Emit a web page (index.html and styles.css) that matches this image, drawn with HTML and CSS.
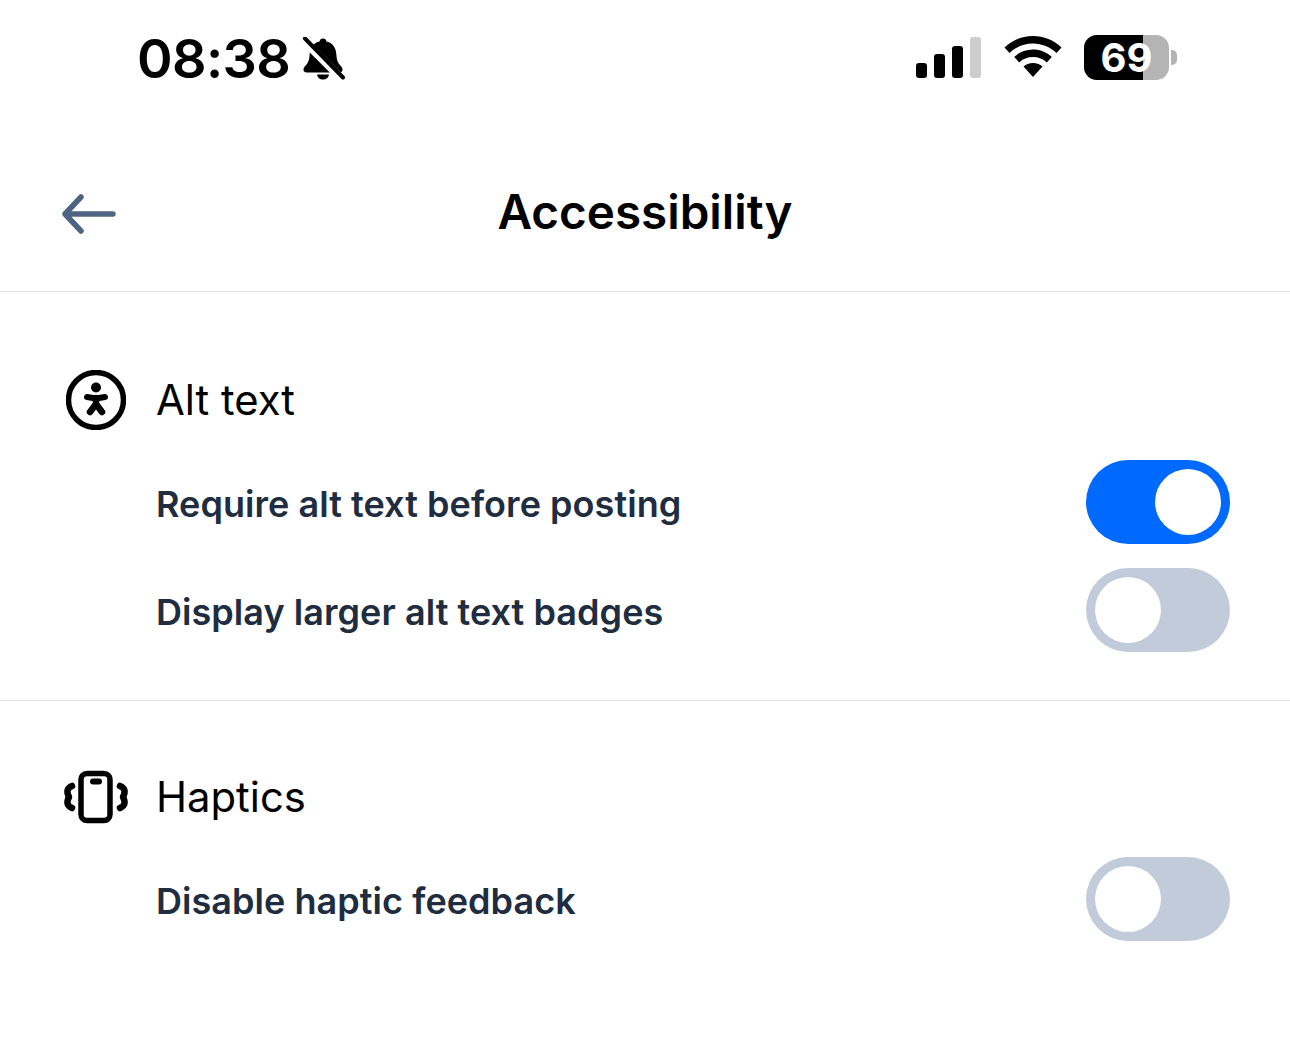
FILE: index.html
```html
<!DOCTYPE html>
<html lang="en">
<head>
<meta charset="utf-8">
<title>Accessibility</title>
<link rel="stylesheet" href="styles.css">
</head>
<body>
<div class="status">
  <div class="status-left">
    <span class="time">08:38</span>
    <svg class="bell" viewBox="0 0 44 44" width="44" height="44">
      <path d="M22 1.5c1.9 0 3.2 1.3 3.400 3 6 1.200 9.400 5.800 9.900 12.400.3 5.200 1.200 8.600 3.600 11.200 1.800 1.900 2.600 3 2.600 4.600 0 1.700-1.300 2.800-3.200 2.800H5.700c-1.900 0-3.200-1.100-3.200-2.800 0-1.600.8-2.700 2.600-4.600 2.400-2.600 3.300-6 3.600-11.200.5-6.600 3.900-11.200 9.900-12.400.2-1.700 1.500-3 3.400-3z"/>
      <path d="M16 37.500h12c-.4 3-2.900 5-6 5s-5.600-2-6-5z"/>
      <path d="M2 3 41 42" class="bell-gap"/>
      <path d="M4 1.500 42 40.500" class="bell-line"/>
    </svg>
  </div>
  <div class="status-right">
    <div class="signal">
      <span class="bar bar-1"></span>
      <span class="bar bar-2"></span>
      <span class="bar bar-3"></span>
      <span class="bar bar-4"></span>
    </div>
    <svg class="wifi" viewBox="0 0 60 44" width="60" height="44">
      <path d="M30 1C19 1 9.500 5 1.500 12.500l5 5.500C13 12 21 8.600 30 8.600S47 12 53.500 18l5-5.500C50.500 5 41 1 30 1z"/>
      <path d="M30 14.500c-7.300 0-13.600 2.600-18.800 7.400l5 5.500c3.700-3.400 8.300-5.300 13.800-5.300s10.100 1.900 13.800 5.300l5-5.500C43.600 17.100 37.300 14.500 30 14.500z"/>
      <path d="M30 28c-3.800 0-7 1.300-9.500 3.500L30 42l9.500-10.500C37 29.300 33.800 28 30 28z"/>
    </svg>
    <div class="battery">
      <div class="battery-body">
        <span class="battery-fill"></span>
        <span class="battery-level">69</span>
      </div>
      <span class="battery-cap"></span>
    </div>
  </div>
</div>

<header class="header">
  <svg class="back" viewBox="0 0 56 44" width="56" height="44">
    <path d="M52 22H4M20 5 4 22l16 17"/>
  </svg>
  <h1 class="title">Accessibility</h1>
</header>

<section class="section section-first">
  <div class="section-title">
    <span class="icon-box">
      <svg viewBox="0 0 60 60" width="60" height="60">
        <circle class="ring" cx="30" cy="30" r="27.500"/>
        <circle class="solid" cx="30" cy="17.500" r="5"/>
        <path class="figure-arms" d="M21 27l9 1.500 9-1.500"/>
        <path class="figure" d="M30 28v6M30 34l-6 8M30 34l6 8"/>
      </svg>
    </span>
    <h2 class="section-name">Alt text</h2>
  </div>
  <div class="rows">
    <div class="row">
      <span class="label">Require alt text before posting</span>
      <span class="toggle toggle-on"><span class="thumb"></span></span>
    </div>
    <div class="row">
      <span class="label">Display larger alt text badges</span>
      <span class="toggle"><span class="thumb"></span></span>
    </div>
  </div>
</section>

<section class="section">
  <div class="section-title">
    <span class="icon-box">
      <svg viewBox="0 0 68 56" width="68" height="56">
        <rect class="ring" x="19" y="4.500" width="29" height="47" rx="6"/>
        <path class="notch" d="M31 12.500h6"/>
        <path class="wave" d="M10 17C4.500 19.500 4.500 23 7 28 4.500 33 4.500 36.500 10 39"/>
        <path class="wave" d="M58 17C63.500 19.500 63.500 23 61 28 63.500 33 63.500 36.500 58 39"/>
      </svg>
    </span>
    <h2 class="section-name">Haptics</h2>
  </div>
  <div class="rows">
    <div class="row">
      <span class="label">Disable haptic feedback</span>
      <span class="toggle"><span class="thumb"></span></span>
    </div>
  </div>
</section>
</body>
</html>
```

FILE: styles.css
```css
* { box-sizing: border-box; }
html, body { margin: 0; padding: 0; }
body {
  width: 1290px;
  height: 1046px;
  overflow: hidden;
  background: #fff;
  color: #000;
  font-family: Inter, "Liberation Sans", sans-serif;
}

.status {
  height: 118px;
  display: flex;
  justify-content: space-between;
  align-items: center;
  padding: 0 113px 4px 137px;
}
.status-left { display: flex; align-items: center; gap: 11px; margin-top: 4px; }
.time {
  font-size: 54px;
  font-weight: 600;
  line-height: 60px;
  letter-spacing: -0.6px;
}
.bell { display: block; width: 44px; height: 44px; }
.bell-gap { stroke: #fff; stroke-width: 8; fill: none; }
.bell-line { stroke: #000; stroke-width: 4; fill: none; stroke-linecap: round; }

.status-right { display: flex; align-items: center; }
.signal { display: flex; align-items: flex-end; gap: 7px; height: 41px; margin-right: 22px; }
.bar { width: 11px; background: #000; border-radius: 3px; display: block; }
.bar-1 { height: 15px; }
.bar-2 { height: 24px; }
.bar-3 { height: 32px; }
.bar-4 { height: 41px; background: #cdcdcd; }
.wifi { display: block; margin-right: 21px; }
.battery { display: flex; align-items: center; gap: 2px; }
.battery-body {
  position: relative;
  width: 85px;
  height: 45px;
  border-radius: 13px;
  background: #b4b4b4;
  display: flex;
  align-items: center;
  justify-content: center;
}
.battery-fill {
  position: absolute;
  left: 0;
  top: 0;
  bottom: 0;
  width: 59px;
  background: #000;
  border-radius: 13px 0 0 13px;
}
.battery-level {
  position: relative;
  color: #fff;
  font-size: 40px;
  font-weight: 700;
  line-height: 45px;
}
.battery-cap {
  width: 6px;
  height: 15px;
  background: #b4b4b4;
  border-radius: 0 5px 5px 0;
}

.header {
  height: 174px;
  position: relative;
  display: flex;
  align-items: center;
  justify-content: center;
  border-bottom: 1px solid #e1e5ea;
  padding-top: 15px;
}
.back {
  position: absolute;
  left: 61px;
  top: 74px;
}
.back path {
  fill: none;
  stroke: #4f6482;
  stroke-width: 5.500;
  stroke-linecap: round;
  stroke-linejoin: round;
}
.title {
  margin: 0;
  font-size: 47.600px;
  font-weight: 600;
  line-height: 56px;
  color: #000;
}

.section { padding: 67px 60px 48px; border-bottom: 1px solid #e1e5ea; }
.section-first { padding-top: 79px; }
.section:last-of-type { border-bottom: 0; }
.section-title { display: flex; align-items: center; height: 58px; margin-bottom: 31px; }
.icon-box { width: 97px; flex: none; display: flex; align-items: center; justify-content: flex-start; }
.icon-box svg { display: block; margin-left: 2px; flex: none; }
.section-first .icon-box svg { margin-left: 6px; }
.section-name { margin: 0 0 0 -1px; font-size: 41.800px; font-weight: 400; line-height: 58px; color: #000; }
.ring { fill: none; stroke: #000; stroke-width: 5.500; }
.solid { fill: #000; }
.figure, .figure-arms, .notch, .wave { fill: none; stroke: #000; stroke-linecap: round; stroke-linejoin: round; }
.figure { stroke-width: 6.500; }
.figure-arms { stroke-width: 6; }
.notch { stroke-width: 6; }
.wave { stroke-width: 6.500; }

.rows { display: flex; flex-direction: column; gap: 24px; padding-left: 96px; }
.row { display: flex; align-items: center; justify-content: space-between; height: 84px; }
.label { font-size: 36px; font-weight: 600; line-height: 46px; color: #202d40; padding-top: 3px; letter-spacing: 0.05px; }
.toggle {
  width: 144px;
  height: 84px;
  border-radius: 42px;
  background: #c1cbda;
  padding: 9px;
  display: flex;
  justify-content: flex-start;
}
.toggle-on { background: #006aff; justify-content: flex-end; }
.thumb { width: 66px; height: 66px; border-radius: 50%; background: #fff; display: block; }
```
